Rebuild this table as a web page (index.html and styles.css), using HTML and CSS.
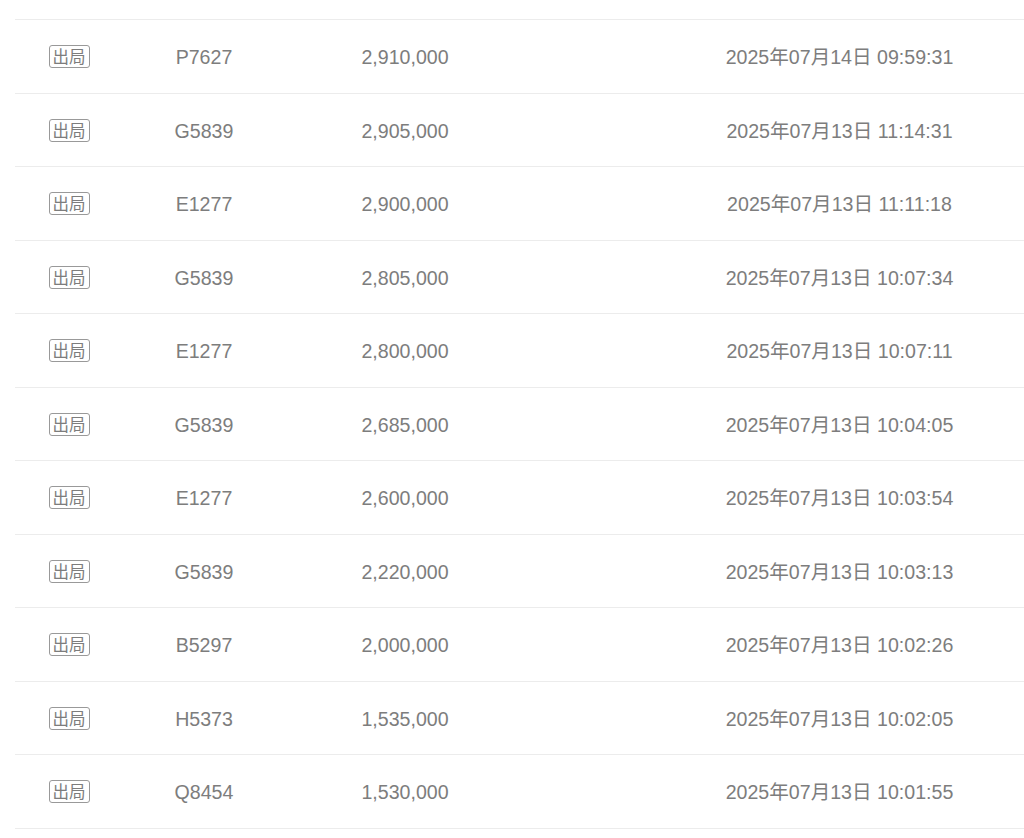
FILE: index.html
```html
<!DOCTYPE html>
<html lang="zh">
<head>
<meta charset="utf-8">
<link rel="stylesheet" href="styles.css">
</head>
<body>
<div class="page">
  <div class="list">
    <div class="row"><div class="c1"><span class="badge">出局</span></div><div class="c2">P7627</div><div class="c3">2,910,000</div><div class="c4">2025年07月14日 09:59:31</div></div>
    <div class="row"><div class="c1"><span class="badge">出局</span></div><div class="c2">G5839</div><div class="c3">2,905,000</div><div class="c4">2025年07月13日 11:14:31</div></div>
    <div class="row"><div class="c1"><span class="badge">出局</span></div><div class="c2">E1277</div><div class="c3">2,900,000</div><div class="c4">2025年07月13日 11:11:18</div></div>
    <div class="row"><div class="c1"><span class="badge">出局</span></div><div class="c2">G5839</div><div class="c3">2,805,000</div><div class="c4">2025年07月13日 10:07:34</div></div>
    <div class="row"><div class="c1"><span class="badge">出局</span></div><div class="c2">E1277</div><div class="c3">2,800,000</div><div class="c4">2025年07月13日 10:07:11</div></div>
    <div class="row"><div class="c1"><span class="badge">出局</span></div><div class="c2">G5839</div><div class="c3">2,685,000</div><div class="c4">2025年07月13日 10:04:05</div></div>
    <div class="row"><div class="c1"><span class="badge">出局</span></div><div class="c2">E1277</div><div class="c3">2,600,000</div><div class="c4">2025年07月13日 10:03:54</div></div>
    <div class="row"><div class="c1"><span class="badge">出局</span></div><div class="c2">G5839</div><div class="c3">2,220,000</div><div class="c4">2025年07月13日 10:03:13</div></div>
    <div class="row"><div class="c1"><span class="badge">出局</span></div><div class="c2">B5297</div><div class="c3">2,000,000</div><div class="c4">2025年07月13日 10:02:26</div></div>
    <div class="row"><div class="c1"><span class="badge">出局</span></div><div class="c2">H5373</div><div class="c3">1,535,000</div><div class="c4">2025年07月13日 10:02:05</div></div>
    <div class="row"><div class="c1"><span class="badge">出局</span></div><div class="c2">Q8454</div><div class="c3">1,530,000</div><div class="c4">2025年07月13日 10:01:55</div></div>
  </div>
</div>
</body>
</html>
```
FILE: styles.css
```css
html, body {
  margin: 0;
  padding: 0;
  background: #fff;
  overflow: hidden;
}
.page {
  width: 1024px;
  height: 838px;
  overflow: hidden;
  padding: 19px 0 0 15px;
  box-sizing: border-box;
  font-family: "Liberation Sans", Arial, "Noto Sans CJK SC", sans-serif;
  color: #7d7d7d;
}
.list {
  width: 1139px;
}
.row {
  display: grid;
  grid-template-columns: 108px 162px 240px 629px;
  align-items: center;
  height: 73.5px;
  box-sizing: border-box;
  border-top: 1px solid #ececec;
  font-size: 19.6px;
  line-height: 24px;
  text-align: center;
}
.row:last-child {
  height: 74.5px;
  border-bottom: 1px solid #ececec;
}
.c1, .c2, .c3, .c4 {
  height: 24px;
  line-height: 24px;
  padding-top: 2px;
  overflow: visible;
}
.c1 {
  padding-top: 0;
}
.badge {
  display: inline-block;
  box-sizing: border-box;
  width: 41px;
  height: 23px;
  line-height: 20px;
  border: 1.5px solid #999;
  border-radius: 3px;
  font-size: 16.5px;
  color: #7d7d7d;
  font-family: "Noto Sans CJK SC", sans-serif;
  vertical-align: top;
  margin-top: 1px;
}
```
